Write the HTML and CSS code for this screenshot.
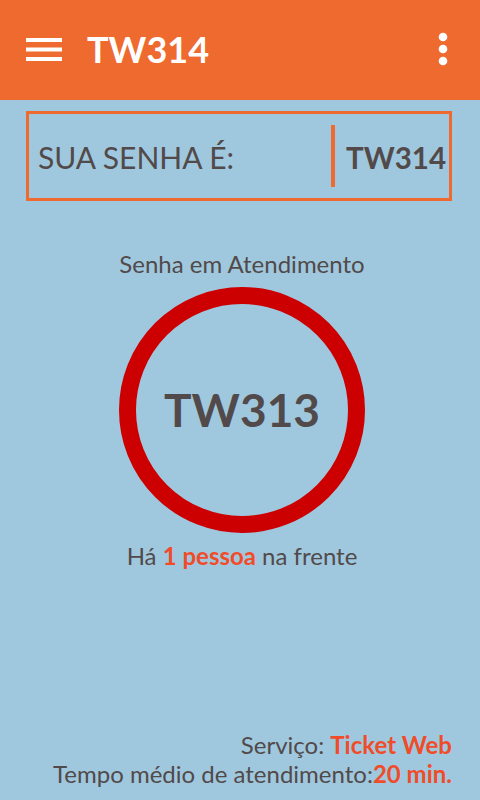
FILE: index.html
```html
<!DOCTYPE html>
<html lang="pt">
<head>
<meta charset="utf-8">
<link rel="stylesheet" href="styles.css">
</head>
<body>
<div class="app">
  <header class="topbar">
    <svg class="menu" width="36" height="26" viewBox="0 0 36 26">
      <rect x="0" y="1" width="36" height="4" fill="#fff"/>
      <rect x="0" y="10.5" width="36" height="4" fill="#fff"/>
      <rect x="0" y="20" width="36" height="4" fill="#fff"/>
    </svg>
    <h1 class="title">TW314</h1>
    <svg class="more" width="10" height="34" viewBox="0 0 10 34">
      <circle cx="5" cy="5" r="4.3" fill="#fff"/>
      <circle cx="5" cy="17" r="4.3" fill="#fff"/>
      <circle cx="5" cy="29" r="4.3" fill="#fff"/>
    </svg>
  </header>
  <main class="content">
    <div class="ticket">
      <span class="ticket-label">SUA SENHA É:</span>
      <span class="ticket-sep"></span>
      <span class="ticket-code">TW314</span>
    </div>
    <p class="current-label">Senha em Atendimento</p>
    <div class="ring"><span class="ring-code">TW313</span></div>
    <p class="queue">Há <strong class="hl">1 pessoa</strong> na frente</p>
    <div class="spacer"></div>
    <div class="info">
      <p>Serviço: <strong class="hl">Ticket Web</strong></p>
      <p>Tempo médio de atendimento:<strong class="hl">20 min.</strong></p>
    </div>
  </main>
</div>
</body>
</html>
```
FILE: styles.css
```css
* { box-sizing: border-box; }
html, body { margin: 0; padding: 0; }
body {
  width: 480px;
  height: 800px;
  overflow: hidden;
  font-family: Lato, "Noto Sans", sans-serif;
  background: #9fc8de;
  color: #524a4a;
}
.app { display: flex; flex-direction: column; height: 800px; }
.topbar {
  height: 100px;
  background: #ee6a2f;
  display: flex;
  align-items: center;
  padding: 0 32px 0 26px;
  flex-shrink: 0;
}
.menu { display: block; margin-top: -1px; }
.title {
  margin: -2px 0 0 25px;
  color: #fff;
  font-size: 36px;
  font-weight: 700;
  flex: 1;
  line-height: 1;
}
.more { display: block; margin-top: -2px; }
.content {
  flex: 1;
  display: flex;
  flex-direction: column;
  align-items: center;
  padding: 11px 28px 12px 26px;
}
.ticket {
  width: 426px;
  height: 90px;
  border: 3px solid #ee6a2f;
  display: flex;
  align-items: center;
  padding: 0 3px 0 9px;
}
.ticket-label { font-size: 30px; flex: 1; margin-top: 2px; }
.ticket-sep {
  width: 4px;
  height: 62px;
  background: #ee6a2f;
  margin-right: 11px;
}
.ticket-code { font-size: 29.5px; font-weight: 700; margin-top: 2px; }
.current-label {
  margin: 49px 0 0 6px;
  font-size: 24px;
  line-height: 28px;
}
.ring {
  margin: 9px 0 0 6px;
  width: 246px;
  height: 246px;
  border-radius: 50%;
  border: 17px solid #cc0000;
  display: flex;
  align-items: center;
  justify-content: center;
}
.ring-code { font-size: 46px; font-weight: 700; margin-top: -2px; }
.queue {
  margin: 9px 0 0 6px;
  font-size: 24px;
  line-height: 28px;
}
.hl { color: #f04c2a; font-weight: 700; }
.spacer { flex: 1; }
.info { align-self: flex-end; text-align: right; font-size: 24px; line-height: 29px; }
.info p { margin: 0; }
```
